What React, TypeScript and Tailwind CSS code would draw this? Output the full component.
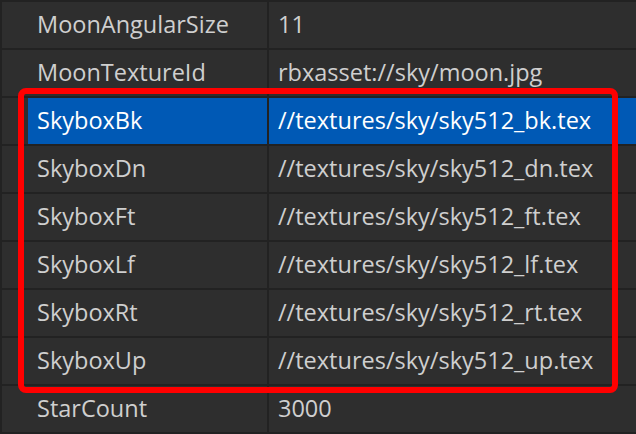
import React from 'react';

interface Prop {
  name: string;
  value: string;
}

const props: Prop[] = [
  { name: 'MoonAngularSize', value: '11' },
  { name: 'MoonTextureId', value: 'rbxasset://sky/moon.jpg' },
  { name: 'SkyboxBk', value: '//textures/sky/sky512_bk.tex' },
  { name: 'SkyboxDn', value: '//textures/sky/sky512_dn.tex' },
  { name: 'SkyboxFt', value: '//textures/sky/sky512_ft.tex' },
  { name: 'SkyboxLf', value: '//textures/sky/sky512_lf.tex' },
  { name: 'SkyboxRt', value: '//textures/sky/sky512_rt.tex' },
  { name: 'SkyboxUp', value: '//textures/sky/sky512_up.tex' },
  { name: 'StarCount', value: '3000' },
];

const App: React.FC = () => {
  const selected = 'SkyboxBk';

  return (
    <div
      className="relative w-[636px] h-[434px] overflow-hidden bg-[#2e2e2e] border-t-2 border-l-2 border-[#222222] text-[23.5px] text-[#cfcfcf]"
      style={{ fontFamily: '"Open Sans", "Noto Sans", sans-serif' }}
    >
      {props.map((p) => {
        const isSel = p.name === selected;
        return (
          <div key={p.name} className="flex h-[48px] border-b-2 border-[#222222]">
            {/* gutter */}
            <div className="w-[26px] shrink-0" />
            <div
              className={`w-[241px] shrink-0 flex items-center pl-[9px] border-r-2 border-[#222222] ${isSel ? 'bg-[#0059b5] text-white' : ''}`}
            >
              {p.name}
            </div>
            <div className={`flex-1 flex items-center pl-[9px] ${isSel ? 'bg-[#0059b5] text-white' : ''}`}>
              {p.value}
            </div>
          </div>
        );
      })}

      {/* red annotation box */}
      <div className="absolute left-[16px] top-[86px] w-[600px] h-[305px] border-[6px] border-[#ff0000] rounded-[8px] pointer-events-none" />
    </div>
  );
};

export default App;
